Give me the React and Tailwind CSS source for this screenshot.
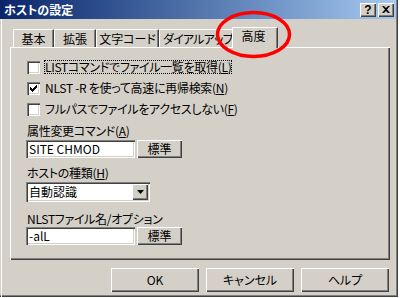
import React from "react";

const RAISED =
  "shadow-[inset_1px_1px_0_#ffffff,inset_-1px_-1px_0_#404040,inset_-2px_-2px_0_#808080]";
const SUNKEN =
  "shadow-[inset_1px_1px_0_#808080,inset_2px_2px_0_#404040,inset_-1px_-1px_0_#ffffff,inset_-2px_-2px_0_#d4d0c8]";

function CheckBox({ checked }) {
  return (
    <div
      className={`w-[13px] h-[13px] bg-white shrink-0 flex items-center justify-center ${SUNKEN}`}
    >
      {checked && (
        <svg width="13" height="13" viewBox="0 0 13 13">
          <path d="M3 5h1v1h1v1h1V6h1V5h1V4h1V3h1v3H9v1H8v1H7v1H6v1H5V9H4V8H3z" fill="#000" />
        </svg>
      )}
    </div>
  );
}

function Row({ checked, focus, children, className }) {
  return (
    <div className={`flex items-center h-[14px] ${className}`}>
      <CheckBox checked={checked} />
      <div
        className={`ml-[4px] h-[14px] flex items-center border ${
          focus ? "border-dotted border-black" : "border-transparent"
        }`}
      >
        <span className="leading-none whitespace-nowrap tracking-[-0.3px]">{children}</span>
      </div>
    </div>
  );
}

function Btn({ children, className }) {
  return (
    <div
      className={`bg-[#d4d0c8] flex items-center justify-center leading-none whitespace-nowrap ${RAISED} ${className}`}
    >
      {children}
    </div>
  );
}

function Tab({ children, w }) {
  return (
    <div
      className={`h-[18px] flex items-center justify-center whitespace-nowrap border-l border-t border-white shadow-[inset_-1px_0_0_#808080] border-r border-r-[#404040] ${w}`}
    >
      <span className="leading-none whitespace-nowrap">{children}</span>
    </div>
  );
}

export default function App() {
  return (
    <div className="w-[400px] h-[298px] bg-white relative overflow-hidden text-black text-[12px] font-['Noto_Sans_CJK_JP','Noto_Sans_CJK_SC',sans-serif] [font-feature-settings:'palt']">
      <div className="w-[398px] h-[297px] bg-[#d4d0c8] flex flex-col shadow-[inset_-1px_-1px_0_#404040,inset_-2px_-2px_0_#808080]">
        {/* title bar */}
        <div className="h-[19px] w-[396px] shrink-0 flex items-center bg-gradient-to-r from-[#0a246a] to-[#a6caf0] pl-[4px] pr-[2px]">
          <span className="text-white font-bold leading-none flex-1">ホストの設定</span>
          <Btn className="w-[16px] h-[14px] text-[12px] font-bold font-['Liberation_Sans',sans-serif] mr-[2px]">
            <span className="mt-[1px]">?</span>
          </Btn>
          <Btn className="w-[16px] h-[14px]">
            <svg width="8" height="7" viewBox="0 0 8 7" className="-mt-[1px]">
              <path d="M0 0h2l2 2 2-2h2L5 3.5 8 7H6L4 5 2 7H0l3-3.5z" fill="#000" />
            </svg>
          </Btn>
        </div>

        {/* body */}
        <div className="flex-1 ml-[1px] border-l border-white flex flex-col pl-[8px] pt-[8px]">
          {/* tabs */}
          <div className="h-[20px] flex items-end pl-[3px]">
            <Tab w="w-[41px]">基本</Tab>
            <Tab w="w-[42px]">拡張</Tab>
            <Tab w="w-[63px]">文字コード</Tab>
            <Tab w="w-[75px] justify-start pl-[3px] overflow-hidden tracking-[-0.8px]">ダイアルアップ</Tab>
            <div className="relative z-10 -ml-[2px] -mb-[1px] w-[46px] h-[21px] bg-[#d4d0c8] flex items-start pt-[2px] justify-center border-l border-t border-white border-r border-r-[#404040] shadow-[inset_-1px_0_0_#808080]">
              <span className="leading-none -ml-[3px] whitespace-nowrap">高度</span>
            </div>
          </div>

          {/* panel */}
          <div className={`w-[380px] h-[213px] flex flex-col pl-[17px] ${RAISED}`}>
            <Row focus className="mt-[13px]">
              LISTコマンドでファイル一覧を取得(<u>L</u>)
            </Row>
            <Row checked className="mt-[7px]">
              NLST -R を使って高速に再帰検索(<u>N</u>)
            </Row>
            <Row className="mt-[7px]">
              フルパスでファイルをアクセスしない(<u>F</u>)
            </Row>

            <div className="mt-[8px] h-[14px] flex items-center leading-none tracking-[-0.3px]">
              属性変更コマンド(<u>A</u>)
            </div>
            <div className="mt-[2px] flex items-center -ml-[1px]">
              <div className={`w-[109px] h-[18px] bg-white flex items-center pl-[3px] leading-none ${SUNKEN}`}>
                SITE CHMOD
              </div>
              <Btn className="ml-[2px] w-[45px] h-[18px]">標準</Btn>
            </div>

            <div className="mt-[8px] h-[14px] flex items-center leading-none tracking-[-0.3px]">
              ホストの種類(<u>H</u>)
            </div>
            <div
              className={`mt-[2px] -ml-[1px] w-[124px] h-[20px] bg-white flex items-center pl-[3px] pr-[2px] ${SUNKEN}`}
            >
              <span className="flex-1 leading-none">自動認識</span>
              <Btn className="w-[16px] h-[16px]">
                <svg width="7" height="4" viewBox="0 0 7 4">
                  <path d="M0 0h7L3.5 4z" fill="#000" />
                </svg>
              </Btn>
            </div>

            <div className="mt-[10px] h-[14px] flex items-center leading-none tracking-[-0.3px]">
              NLSTファイル名/オプション
            </div>
            <div className="mt-[1px] flex items-center -ml-[1px]">
              <div className={`w-[109px] h-[18px] bg-white flex items-center pl-[3px] leading-none ${SUNKEN}`}>
                -alL
              </div>
              <Btn className="ml-[2px] w-[45px] h-[18px]">標準</Btn>
            </div>
          </div>

          {/* buttons */}
          <div className="mt-[8px] flex gap-[7px] ml-[101px]">
            <Btn className="w-[88px] h-[24px]">OK</Btn>
            <Btn className="w-[88px] h-[24px]">キャンセル</Btn>
            <Btn className="w-[88px] h-[24px]">ヘルプ</Btn>
          </div>
        </div>
      </div>

      {/* red annotation ellipse */}
      <svg
        className="absolute left-[214px] top-[10px]"
        width="80"
        height="50"
        viewBox="0 0 80 50"
      >
        <ellipse cx="39.5" cy="24.5" rx="36" ry="22" fill="none" stroke="#ff0000" strokeWidth="3.5" />
      </svg>
    </div>
  );
}
